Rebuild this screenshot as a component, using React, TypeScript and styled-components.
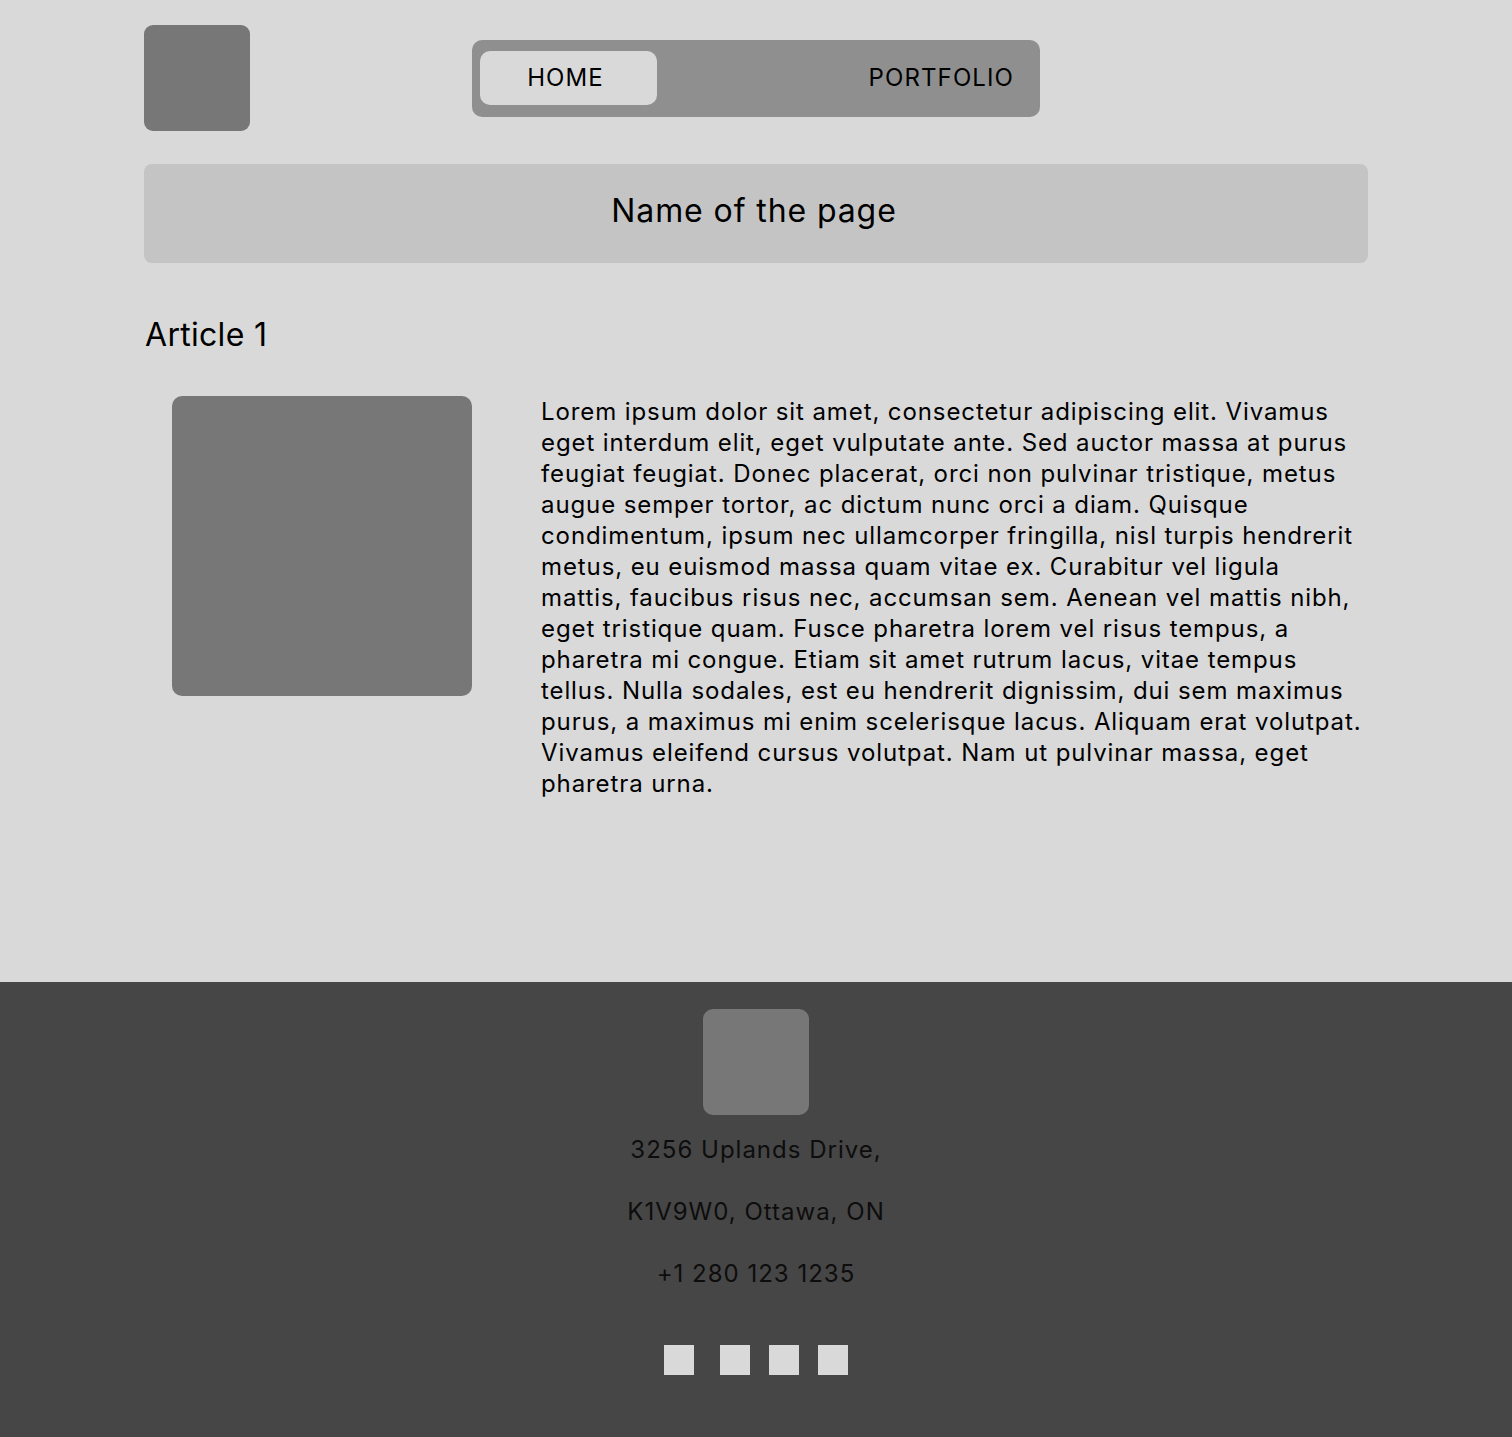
import React from "react";
import styled, { createGlobalStyle } from "styled-components";

const GlobalStyle = createGlobalStyle`
  body {
    margin: 0;
    background: #d9d9d9;
    font-family: Inter, "Noto Sans", "Liberation Sans", sans-serif;
    color: #000;
  }
`;

const Page = styled.div`
  display: flex;
  flex-direction: column;
  min-height: 1437px;
`;

const Main = styled.main`
  width: 1224px;
  margin: 0 auto;
  padding-top: 25px;
  flex: 1;
`;

const Header = styled.header`
  display: grid;
  grid-template-columns: 1fr auto 1fr;
  align-items: center;
`;

const Logo = styled.div`
  width: 106px;
  height: 106px;
  border-radius: 9px;
  background: #777777;
`;

const Nav = styled.nav`
  width: 568px;
  height: 77px;
  box-sizing: border-box;
  padding: 11px 26px 12px 8px;
  background: #908f8f;
  border-radius: 10px;
  display: flex;
  align-items: center;
  justify-content: space-between;
`;

const NavItem = styled.a<{ $active?: boolean }>`
  display: flex;
  align-items: center;
  justify-content: center;
  box-sizing: border-box;
  height: 54px;
  width: ${(p) => (p.$active ? "177px" : "auto")};
  padding-right: ${(p) => (p.$active ? "6px" : "0")};
  border-radius: 10px;
  background: ${(p) => (p.$active ? "#d9d9d9" : "transparent")};
  font-size: 24px;
  letter-spacing: 1.1px;
  color: #000;
  text-decoration: none;
`;

const TitleBar = styled.div`
  margin-top: 33px;
  height: 99px;
  background: #c4c4c4;
  border-radius: 8px;
  display: flex;
  align-items: center;
  justify-content: center;
`;

const PageTitle = styled.h1`
  margin: 0 4px 6px 0;
  font-size: 32px;
  font-weight: 400;
  letter-spacing: 0.9px;
`;

const ArticleTitle = styled.h2`
  margin: 52px 0 0 1px;
  font-size: 32px;
  font-weight: 400;
  line-height: 40px;
  letter-spacing: 0.3px;
`;

const ArticleRow = styled.section`
  display: flex;
  gap: 69px;
  margin-top: 41px;
  padding-left: 28px;
`;

const Picture = styled.div`
  flex: none;
  width: 300px;
  height: 300px;
  border-radius: 10px;
  background: #777777;
`;

const Body = styled.p`
  margin: 0;
  width: 826px;
  font-size: 24px;
  line-height: 31px;
  letter-spacing: 0.9px;
`;

const Footer = styled.footer`
  background: #464646;
  padding: 27px 0 62px;
  display: flex;
  flex-direction: column;
  align-items: center;
`;

const FooterLogo = styled(Logo)`
  border-radius: 10px;
`;

const Address = styled.div`
  margin-top: 4px;
  display: flex;
  flex-direction: column;
  align-items: center;
`;

const Line = styled.span`
  font-size: 24px;
  line-height: 62px;
  letter-spacing: 1px;
  color: #0d0d0d;
`;

const Socials = styled.div`
  margin-top: 40px;
  display: flex;
  gap: 19px;
`;

const Social = styled.div<{ $wide?: boolean }>`
  width: 30px;
  height: 30px;
  background: #d9d9d9;
  margin-right: ${(p) => (p.$wide ? "7px" : "0")};
`;

const text =
  "Lorem ipsum dolor sit amet, consectetur adipiscing elit. Vivamus eget interdum elit, eget vulputate ante. Sed auctor massa at purus feugiat feugiat. Donec placerat, orci non pulvinar tristique, metus augue semper tortor, ac dictum nunc orci a diam. Quisque condimentum, ipsum nec ullamcorper fringilla, nisl turpis hendrerit metus, eu euismod massa quam vitae ex. Curabitur vel ligula mattis, faucibus risus nec, accumsan sem. Aenean vel mattis nibh, eget tristique quam. Fusce pharetra lorem vel risus tempus, a pharetra mi congue. Etiam sit amet rutrum lacus, vitae tempus tellus. Nulla sodales, est eu hendrerit dignissim, dui sem maximus purus, a maximus mi enim scelerisque lacus. Aliquam erat volutpat. Vivamus eleifend cursus volutpat. Nam ut pulvinar massa, eget pharetra urna.";

const App = () => {
  return (
    <Page>
      <GlobalStyle />
      <Main>
        <Header>
          <Logo />
          <Nav>
            <NavItem $active href="#">HOME</NavItem>
            <NavItem href="#">PORTFOLIO</NavItem>
          </Nav>
          <div />
        </Header>
        <TitleBar>
          <PageTitle>Name of the page</PageTitle>
        </TitleBar>
        <ArticleTitle>Article 1</ArticleTitle>
        <ArticleRow>
          <Picture />
          <Body>{text}</Body>
        </ArticleRow>
      </Main>
      <Footer>
        <FooterLogo />
        <Address>
          <Line>3256 Uplands Drive,</Line>
          <Line>K1V9W0, Ottawa, ON</Line>
          <Line>+1 280 123 1235</Line>
        </Address>
        <Socials>
          <Social $wide />
          <Social />
          <Social />
          <Social />
        </Socials>
      </Footer>
    </Page>
  );
};

export default App;
